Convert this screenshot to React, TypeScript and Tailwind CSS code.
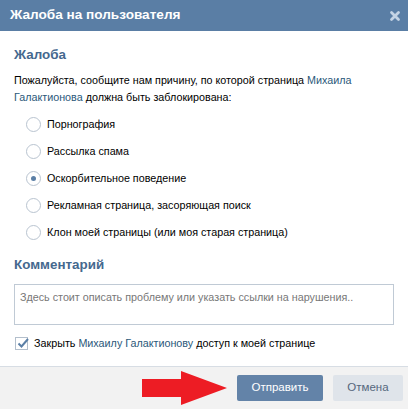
import React from "react";

function Radio({ checked }: { checked?: boolean }) {
  return (
    <span className="flex h-[15px] w-[15px] shrink-0 items-center justify-center rounded-full border border-[#b9c4d0] bg-white">
      {checked && <span className="h-[5px] w-[5px] rounded-full bg-[#5b7fa6]" />}
    </span>
  );
}

const options = [
  "Порнография",
  "Рассылка спама",
  "Оскорбительное поведение",
  "Рекламная страница, засоряющая поиск",
  "Клон моей страницы (или моя старая страница)",
];

export default function App() {
  return (
    <div
      className="flex h-[409px] w-[408px] flex-col bg-white text-[10.75px] text-black"
      style={{ fontFamily: '"Liberation Sans", Arial, sans-serif' }}
    >
      <div className="flex h-[31px] shrink-0 items-center justify-between bg-[#5a7ea5] pl-[10px] pr-[6px]">
        <span className="text-[13.6px] font-bold text-white">Жалоба на пользователя</span>
        <svg width="14" height="14" viewBox="0 0 14 14">
          <path d="M3.5 3.5 L10.5 10.5 M10.5 3.5 L3.5 10.5" stroke="#c4d3e4" strokeWidth="2.8" strokeLinecap="round" />
        </svg>
      </div>
      <div className="flex flex-1 flex-col px-[14px] pt-[16px]">
        <div className="text-[13.4px] font-bold leading-[16px] text-[#45688e]">Жалоба</div>
        <p className="mt-[9px] leading-[17px]">
          Пожалуйста, сообщите нам причину, по которой страница <span className="text-[#2b587a]">Михаила</span>
          <br />
          <span className="text-[#2b587a]">Галактионова</span> должна быть заблокирована:
        </p>
        <div className="mt-[11px] flex flex-col gap-[12px] pl-[12px]">
          {options.map((o, i) => (
            <label key={o} className="flex h-[15px] items-center gap-[6px]">
              <Radio checked={i === 2} />
              <span>{o}</span>
            </label>
          ))}
        </div>
        <div className="mt-[17px] text-[13.4px] font-bold leading-[16px] text-[#45688e]">Комментарий</div>
        <div className="mt-[11px] h-[41px] border border-[#c0cad5] px-[5px] pt-[4px] text-[#777777]">
          Здесь стоит описать проблему или указать ссылки на нарушения..
        </div>
        <div className="mt-[10px] flex items-center gap-[6px] pl-[1px]">
          <span className="relative h-[13px] w-[13px] border border-[#b3bfcc] bg-white">
            <svg width="14" height="14" viewBox="0 0 14 14" className="absolute left-[0px] top-[-2px]">
              <path d="M2.5 7.5 L5.5 10.5 L12 3" stroke="#5b7fa6" strokeWidth="2" fill="none" />
            </svg>
          </span>
          <span>
            Закрыть <span className="text-[#2b587a]">Михаилу Галактионову</span> доступ к моей странице
          </span>
        </div>
      </div>
      <div className="flex h-[43px] shrink-0 items-center justify-end gap-[10px] border-t border-[#d7dde4] bg-[#f2f2f2] pr-[5px]">
        <svg width="86" height="34" viewBox="0 0 86 34" className="mr-[-1px]">
          <path d="M0 8 H39 V0 L85 17 L39 34 V26 H0 Z" fill="#ed1c24" />
        </svg>
        <button className="h-[26px] w-[86px] rounded-[2px] bg-[#6383a8] text-[11.5px] text-white">Отправить</button>
        <button className="h-[26px] w-[70px] rounded-[2px] bg-[#dfe4ea] text-[11.5px] text-[#55677d]">Отмена</button>
      </div>
    </div>
  );
}
